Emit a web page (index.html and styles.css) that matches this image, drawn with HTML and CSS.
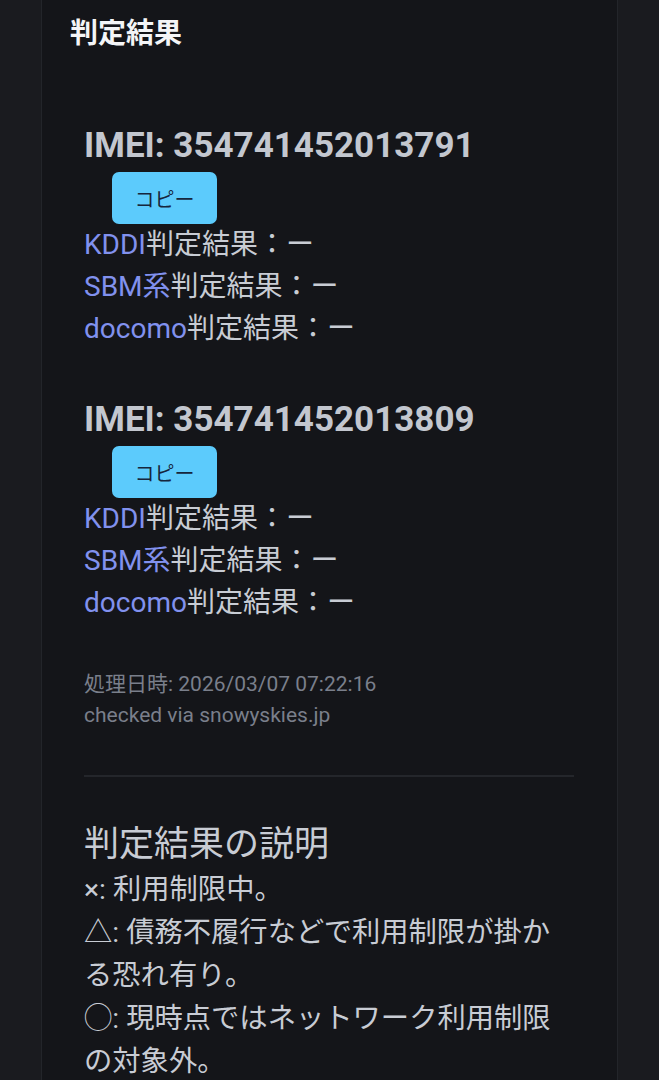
FILE: index.html
```html
<!DOCTYPE html>
<html lang="ja">
<head>
<meta charset="utf-8">
<title>判定結果</title>
<link rel="stylesheet" href="styles.css">
</head>
<body>
<div class="page">
  <section class="card">
    <h2 class="card-title">判定結果</h2>
    <div class="results">
      <div class="imei-block">
        <h3 class="imei">IMEI: 354741452013791</h3>
        <button class="copy-btn" type="button">コピー</button>
        <div class="line"><span class="carrier">KDDI</span>判定結果：ー</div>
        <div class="line"><span class="carrier">SBM系</span>判定結果：ー</div>
        <div class="line"><span class="carrier">docomo</span>判定結果：ー</div>
      </div>
      <div class="imei-block second">
        <h3 class="imei">IMEI: 354741452013809</h3>
        <button class="copy-btn" type="button">コピー</button>
        <div class="line"><span class="carrier">KDDI</span>判定結果：ー</div>
        <div class="line"><span class="carrier">SBM系</span>判定結果：ー</div>
        <div class="line"><span class="carrier">docomo</span>判定結果：ー</div>
      </div>
      <div class="meta">
        <div>処理日時: 2026/03/07 07:22:16</div>
        <div>checked via snowyskies.jp</div>
      </div>
      <hr class="divider">
      <h3 class="legend-title">判定結果の説明</h3>
      <div class="legend">
        <div>×: 利用制限中。</div>
        <div>△: 債務不履行などで利用制限が掛かる恐れ有り。</div>
        <div>◯: 現時点ではネットワーク利用制限の対象外。</div>
      </div>
    </div>
  </section>
</div>
</body>
</html>
```

FILE: styles.css
```css
html, body {
  margin: 0;
  padding: 0;
  background: #1a1b1f;
}

body {
  font-family: Roboto, "Noto Sans CJK JP", sans-serif;
  color: #c6cad2;
}

.page {
  padding: 0 41px;
}

.card {
  background: #141519;
  border: 1px solid #23252a;
  border-top: none;
  padding: 14px 28px 40px;
  min-height: 1100px;
  box-sizing: border-box;
}

.card-title {
  margin: 0;
  font-size: 28px;
  line-height: 40px;
  font-weight: 700;
  color: #f4f5f7;
}

.results {
  padding: 74px 15px 0 14px;
}

.imei-block.second {
  margin-top: 52px;
}

.imei {
  margin: 0;
  font-size: 35px;
  line-height: 36px;
  font-weight: 700;
  color: #c3c7cf;
}

.copy-btn {
  display: block;
  margin: 8px 0 0 28px;
  width: 105px;
  height: 52px;
  border: none;
  border-radius: 7px;
  background: #5ccbfc;
  color: #16263c;
  font-family: "Noto Sans CJK JP", sans-serif;
  font-size: 20px;
  padding: 0;
}

.line {
  font-size: 28px;
  line-height: 42px;
  color: #c8ccd4;
}

.carrier {
  color: #8191ee;
}

.meta {
  margin-top: 45px;
  font-size: 21px;
  line-height: 31px;
  color: #7a7f8b;
}

.divider {
  margin: 44px 0 0;
  border: none;
  height: 2px;
  background: #24262b;
}

.legend-title {
  margin: 46px 0 0;
  font-size: 35px;
  line-height: 44px;
  font-weight: 400;
  color: #c8ccd4;
}

.legend {
  margin-top: 1px;
  font-size: 28.3px;
  line-height: 43px;
  color: #c8ccd4;
}
```
